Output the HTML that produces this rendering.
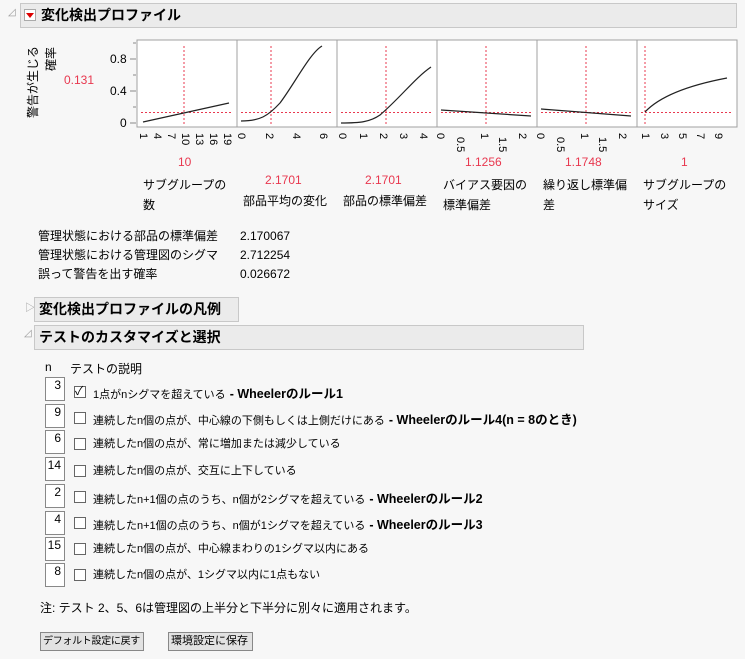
<!DOCTYPE html>
<html><head><meta charset="utf-8"><style>
body{margin:0;background:#f7f7f7;width:745px;height:659px;position:relative;overflow:hidden;font-family:"Liberation Sans","Noto Sans CJK JP",sans-serif;font-size:12px;color:#000}
.a{position:absolute;white-space:nowrap}
.hdr{position:absolute;background:#ebebeb;border:1px solid #c8c8c8;font-weight:bold;font-size:14px;line-height:22px;padding-left:4px;box-sizing:border-box;white-space:nowrap}
.red{color:#e8384f}
.nb{position:absolute;left:45px;width:20px;height:24px;background:#fff;border:1px solid #888;box-sizing:border-box;text-align:right;padding-right:3px;font-size:12px;line-height:14px}
.cb{position:absolute;left:74px;width:12px;height:12px;background:#fff;border:1px solid #666;box-sizing:border-box}
.rt{position:absolute;left:93px;font-size:11px;white-space:nowrap}
.rt b{font-size:12.5px;margin-left:4px}
.btn{position:absolute;top:632px;height:19px;background:#e2e2e2;border:1px solid #888;box-sizing:border-box;font-size:11px;line-height:17px;padding:0 2px;white-space:nowrap;overflow:hidden}
.tk{position:absolute;top:133px;transform:rotate(90deg);transform-origin:left top;font-size:11px;line-height:12px;white-space:nowrap}
.tk.lo{top:137px}
</style></head><body>
<div class="a" style="left:8px;top:7px;color:#999;font-size:10px">◿</div>
<div class="hdr" style="left:20px;top:3px;width:717px;height:25px;padding-left:20px">変化検出プロファイル</div>
<div class="a" style="left:24px;top:9px;width:12px;height:12px;background:#fff;border:1px solid #aaa;box-sizing:border-box"></div>
<div class="a" style="left:26px;top:13px;width:0;height:0;border-left:4px solid transparent;border-right:4px solid transparent;border-top:5px solid #d00"></div>

<div class="a" style="left:26px;top:118px;transform:rotate(-90deg);transform-origin:left top;font-size:12px;line-height:14px">警告が生じる</div>
<div class="a" style="left:44px;top:71px;transform:rotate(-90deg);transform-origin:left top;font-size:12px;line-height:14px">確率</div>
<div class="a red" style="left:64px;top:73px">0.131</div>
<div class="a" style="left:110px;top:52px">0.8</div>
<div class="a" style="left:110px;top:84px">0.4</div>
<div class="a" style="left:120px;top:116px">0</div>

<svg class="a" style="left:130px;top:38px" width="610" height="92">
<g stroke="#888" stroke-width="1" fill="none">
<line x1="0" y1="21" x2="6" y2="21"/><line x1="0" y1="53" x2="6" y2="53"/><line x1="0" y1="85" x2="6" y2="85"/>
<line x1="3" y1="5" x2="6" y2="5"/><line x1="3" y1="37" x2="6" y2="37"/><line x1="3" y1="69" x2="6" y2="69"/>
</g>
<rect x="7" y="2" width="600" height="87" fill="#fff" stroke="#a0a0a0"/>
<g stroke="#a0a0a0"><line x1="107" y1="2" x2="107" y2="89"/><line x1="207" y1="2" x2="207" y2="89"/><line x1="307" y1="2" x2="307" y2="89"/><line x1="407" y1="2" x2="407" y2="89"/><line x1="507" y1="2" x2="507" y2="89"/></g>
<g stroke="#e8384f" stroke-dasharray="2,2" fill="none">
<line x1="11" y1="74.5" x2="103" y2="74.5"/><line x1="111" y1="74.5" x2="203" y2="74.5"/><line x1="211" y1="74.5" x2="303" y2="74.5"/><line x1="311" y1="74.5" x2="403" y2="74.5"/><line x1="411" y1="74.5" x2="503" y2="74.5"/><line x1="511" y1="74.5" x2="603" y2="74.5"/>
<line x1="54" y1="8" x2="54" y2="88"/><line x1="141" y1="8" x2="141" y2="88"/><line x1="256" y1="8" x2="256" y2="88"/><line x1="356" y1="8" x2="356" y2="88"/><line x1="456" y1="8" x2="456" y2="88"/><line x1="515" y1="8" x2="515" y2="88"/>
</g>
<g stroke="#222" fill="none" stroke-width="1.2">
<line x1="13" y1="84" x2="99" y2="65"/>
<path d="M111 83 C130 83 138 78 150 65 C165 45 180 15 192 8"/>
<path d="M211 85 C230 85 240 84 250 77 C270 60 285 40 301 29"/>
<line x1="311" y1="72" x2="401" y2="78"/>
<line x1="411" y1="71" x2="501" y2="78"/>
<path d="M515 74 C530 58 560 47 597 40"/>
</g>
</svg>

<div class="tk" style="left:149px">1</div><div class="tk" style="left:163px">4</div><div class="tk" style="left:177px">7</div><div class="tk" style="left:191px">10</div><div class="tk" style="left:205px">13</div><div class="tk" style="left:219px">16</div><div class="tk" style="left:233px">19</div>
<div class="tk" style="left:247px">0</div><div class="tk" style="left:275px">2</div><div class="tk" style="left:302px">4</div><div class="tk" style="left:329px">6</div>
<div class="tk" style="left:348px">0</div><div class="tk" style="left:369px">1</div><div class="tk" style="left:389px">2</div><div class="tk" style="left:409px">3</div><div class="tk" style="left:429px">4</div>
<div class="tk" style="left:446px">0</div><div class="tk lo" style="left:466px">0.5</div><div class="tk" style="left:490px">1</div><div class="tk lo" style="left:508px">1.5</div><div class="tk" style="left:528px">2</div>
<div class="tk" style="left:546px">0</div><div class="tk lo" style="left:566px">0.5</div><div class="tk" style="left:590px">1</div><div class="tk lo" style="left:608px">1.5</div><div class="tk" style="left:628px">2</div>
<div class="tk" style="left:651px">1</div><div class="tk" style="left:670px">3</div><div class="tk" style="left:688px">5</div><div class="tk" style="left:706px">7</div><div class="tk" style="left:724px">9</div>

<div class="a red" style="left:178px;top:155px">10</div>
<div class="a red" style="left:265px;top:173px">2.1701</div>
<div class="a red" style="left:365px;top:173px">2.1701</div>
<div class="a red" style="left:465px;top:155px">1.1256</div>
<div class="a red" style="left:565px;top:155px">1.1748</div>
<div class="a red" style="left:681px;top:155px">1</div>
<div class="a" style="left:143px;top:175px;line-height:20px">サブグループの<br>数</div>
<div class="a" style="left:243px;top:192px">部品平均の変化</div>
<div class="a" style="left:343px;top:192px">部品の標準偏差</div>
<div class="a" style="left:443px;top:175px;line-height:20px">バイアス要因の<br>標準偏差</div>
<div class="a" style="left:543px;top:175px;line-height:20px">繰り返し標準偏<br>差</div>
<div class="a" style="left:643px;top:175px;line-height:20px">サブグループの<br>サイズ</div>

<div class="a" style="left:38px;top:227px;line-height:19px">管理状態における部品の標準偏差<br>管理状態における管理図のシグマ<br>誤って警告を出す確率</div>
<div class="a" style="left:240px;top:227px;line-height:19px">2.170067<br>2.712254<br>0.026672</div>

<div class="a" style="left:25px;top:299px;color:#999;font-size:10px">▷</div>
<div class="hdr" style="left:34px;top:297px;width:205px;height:25px">変化検出プロファイルの凡例</div>
<div class="a" style="left:24px;top:328px;color:#999;font-size:10px">◿</div>
<div class="hdr" style="left:34px;top:325px;width:550px;height:25px">テストのカスタマイズと選択</div>

<div class="a" style="left:45px;top:360px">n</div>
<div class="a" style="left:70px;top:360px">テストの説明</div>

<div class="nb" style="top:377px">3</div><div class="cb" style="top:386px"></div><div class="a" style="left:75px;top:382px;font-size:12px">✓</div><div class="rt" style="top:383px">1点がnシグマを超えている<b>- Wheelerのルール1</b></div>
<div class="nb" style="top:404px">9</div><div class="cb" style="top:412px"></div><div class="rt" style="top:409px">連続したn個の点が、中心線の下側もしくは上側だけにある<b>- Wheelerのルール4(n = 8のとき)</b></div>
<div class="nb" style="top:430px">6</div><div class="cb" style="top:438px"></div><div class="rt" style="top:435px">連続したn個の点が、常に増加または減少している</div>
<div class="nb" style="top:457px">14</div><div class="cb" style="top:465px"></div><div class="rt" style="top:462px">連続したn個の点が、交互に上下している</div>
<div class="nb" style="top:484px">2</div><div class="cb" style="top:491px"></div><div class="rt" style="top:488px">連続したn+1個の点のうち、n個が2シグマを超えている<b>- Wheelerのルール2</b></div>
<div class="nb" style="top:511px">4</div><div class="cb" style="top:517px"></div><div class="rt" style="top:514px">連続したn+1個の点のうち、n個が1シグマを超えている<b>- Wheelerのルール3</b></div>
<div class="nb" style="top:537px">15</div><div class="cb" style="top:543px"></div><div class="rt" style="top:540px">連続したn個の点が、中心線まわりの1シグマ以内にある</div>
<div class="nb" style="top:563px">8</div><div class="cb" style="top:569px"></div><div class="rt" style="top:566px">連続したn個の点が、1シグマ以内に1点もない</div>

<div class="a" style="left:40px;top:599px">注: テスト 2、5、6は管理図の上半分と下半分に別々に適用されます。</div>
<div class="btn" style="left:40px;width:104px;font-size:10px;letter-spacing:-0.3px">デフォルト設定に戻す</div>
<div class="btn" style="left:168px;width:85px">環境設定に保存</div>
</body></html>
